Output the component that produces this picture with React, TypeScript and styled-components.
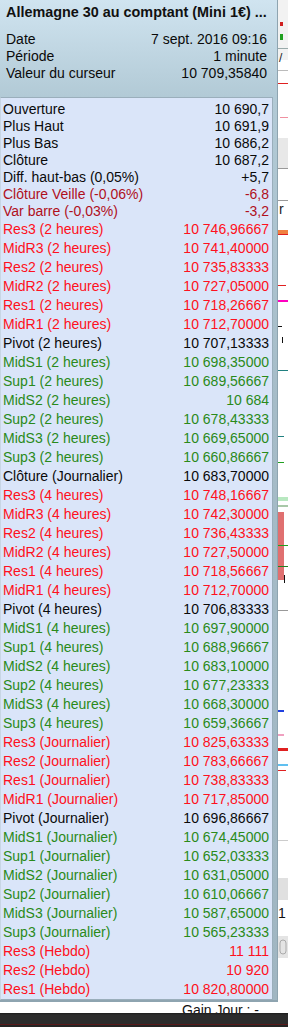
import React from "react";
import styled, { createGlobalStyle } from "styled-components";

const GlobalStyle = createGlobalStyle`
  html, body {
    margin: 0;
    padding: 0;
    width: 288px;
    height: 1027px;
    overflow: hidden;
    background: #fff;
  }
  body {
    font-family: "Liberation Sans", Arial, sans-serif;
  }
`;

type Tone = "black" | "darkred" | "red" | "green";

const toneColor: Record<Tone, string> = {
  black: "#0a0a0a",
  darkred: "#b0101c",
  red: "#ff1020",
  green: "#2a8a1a",
};

const Page = styled.div`
  width: 288px;
  height: 1027px;
  display: flex;
  flex-direction: column;
`;

const Workspace = styled.div`
  display: flex;
  height: 1002px;
`;

const Tooltip = styled.div`
  width: 278px;
  height: 1002px;
  box-sizing: border-box;
  background: linear-gradient(#d0e4f0 0px, #b2cad6 96px, #a6bcc8 400px, #a0b6c2 100%);
  border-right: 1px solid #8ea4b0;
  border-bottom: 2px solid #8ea4b0;
  display: flex;
  flex-direction: column;
`;

const Header = styled.div`
  padding: 4px 10px 0 6px;
  height: 97px;
  box-sizing: border-box;
`;

const Title = styled.div`
  font-weight: bold;
  font-size: 14.4px;
  line-height: 17px;
  color: #111;
  white-space: nowrap;
  margin-bottom: 10px;
`;

const Line = styled.div<{ $tone?: Tone; $height: number }>`
  display: flex;
  justify-content: space-between;
  font-size: 14px;
  line-height: ${(p) => p.$height}px;
  height: ${(p) => p.$height}px;
  color: ${(p) => toneColor[p.$tone ?? "black"]};
  white-space: nowrap;
`;

const Panel = styled.div`
  width: 273px;
  box-sizing: border-box;
  background: #dae5f9;
  border: 1px solid #9aaebb;
  border-left-color: #c8d6e4;
  padding: 2.5px 3px 0 2px;
`;

const ChartStrip = styled.div`
  flex: 1;
  background: #ffffff;
`;

const FooterBand = styled.div`
  height: 11px;
  overflow: hidden;
  background: #fff;
  padding-left: 182px;
  font-size: 14px;
  line-height: 16px;
  color: #111;
  white-space: nowrap;
`;

const DarkBar = styled.div`
  flex: 1;
  background: linear-gradient(#1c1c1c 0px, #2c2c2c 2px, #2c2c2c 11px, #5a1a1a 11px, #5a1a1a 12px, #242424 12px);
`;

const headerRows = [
  ["Date", "7 sept. 2016 09:16"],
  ["Période", "1 minute"],
  ["Valeur du curseur", "10 709,35840"],
];

const topRows: [string, string, Tone][] = [
  ["Ouverture", "10 690,7", "black"],
  ["Plus Haut", "10 691,9", "black"],
  ["Plus Bas", "10 686,2", "black"],
  ["Clôture", "10 687,2", "black"],
  ["Diff. haut-bas (0,05%)", "+5,7", "black"],
  ["Clôture Veille (-0,06%)", "-6,8", "darkred"],
  ["Var barre (-0,03%)", "-3,2", "darkred"],
];

const levelRows: [string, string, Tone][] = [
  ["Res3 (2 heures)", "10 746,96667", "red"],
  ["MidR3 (2 heures)", "10 741,40000", "red"],
  ["Res2 (2 heures)", "10 735,83333", "red"],
  ["MidR2 (2 heures)", "10 727,05000", "red"],
  ["Res1 (2 heures)", "10 718,26667", "red"],
  ["MidR1 (2 heures)", "10 712,70000", "red"],
  ["Pivot (2 heures)", "10 707,13333", "black"],
  ["MidS1 (2 heures)", "10 698,35000", "green"],
  ["Sup1 (2 heures)", "10 689,56667", "green"],
  ["MidS2 (2 heures)", "10 684", "green"],
  ["Sup2 (2 heures)", "10 678,43333", "green"],
  ["MidS3 (2 heures)", "10 669,65000", "green"],
  ["Sup3 (2 heures)", "10 660,86667", "green"],
  ["Clôture (Journalier)", "10 683,70000", "black"],
  ["Res3 (4 heures)", "10 748,16667", "red"],
  ["MidR3 (4 heures)", "10 742,30000", "red"],
  ["Res2 (4 heures)", "10 736,43333", "red"],
  ["MidR2 (4 heures)", "10 727,50000", "red"],
  ["Res1 (4 heures)", "10 718,56667", "red"],
  ["MidR1 (4 heures)", "10 712,70000", "red"],
  ["Pivot (4 heures)", "10 706,83333", "black"],
  ["MidS1 (4 heures)", "10 697,90000", "green"],
  ["Sup1 (4 heures)", "10 688,96667", "green"],
  ["MidS2 (4 heures)", "10 683,10000", "green"],
  ["Sup2 (4 heures)", "10 677,23333", "green"],
  ["MidS3 (4 heures)", "10 668,30000", "green"],
  ["Sup3 (4 heures)", "10 659,36667", "green"],
  ["Res3 (Journalier)", "10 825,63333", "red"],
  ["Res2 (Journalier)", "10 783,66667", "red"],
  ["Res1 (Journalier)", "10 738,83333", "red"],
  ["MidR1 (Journalier)", "10 717,85000", "red"],
  ["Pivot (Journalier)", "10 696,86667", "black"],
  ["MidS1 (Journalier)", "10 674,45000", "green"],
  ["Sup1 (Journalier)", "10 652,03333", "green"],
  ["MidS2 (Journalier)", "10 631,05000", "green"],
  ["Sup2 (Journalier)", "10 610,06667", "green"],
  ["MidS3 (Journalier)", "10 587,65000", "green"],
  ["Sup3 (Journalier)", "10 565,23333", "green"],
  ["Res3 (Hebdo)", "11 111", "red"],
  ["Res2 (Hebdo)", "10 920", "red"],
  ["Res1 (Hebdo)", "10 820,80000", "red"],
];

// chart fragments visible at the right edge behind the tooltip
const ChartEdge = () => (
  <svg width="10" height="1002" viewBox="0 0 10 1002">
    <rect x="0" y="0" width="10" height="60" fill="#f2f2f2" />
    <rect x="2" y="22" width="3" height="4" fill="#d02020" />
    <rect x="2" y="34" width="3" height="6" fill="#20a020" />
    <rect x="0" y="48" width="10" height="1" fill="#9aa" />
    <text x="1" y="62" fontSize="12" fill="#222" fontFamily="Liberation Sans">/</text>
    <rect x="0" y="70" width="10" height="1" fill="#bbb" />
    <rect x="0" y="83" width="10" height="1" fill="#e02020" />
    <rect x="2" y="117" width="8" height="1" fill="#f090a0" />
    <rect x="0" y="138" width="10" height="30" fill="#e8e8e8" />
    <rect x="0" y="168" width="10" height="1" fill="#999" />
    <rect x="0" y="200" width="10" height="1" fill="#999" />
    <text x="1" y="214" fontSize="14" fill="#222" fontFamily="Liberation Sans">r</text>
    <rect x="0" y="230" width="10" height="4" fill="#f08040" />
    <rect x="0" y="234" width="10" height="1" fill="#e02020" />
    <rect x="0" y="285" width="8" height="1" fill="#e02020" />
    <rect x="0" y="300" width="10" height="2" fill="#ff00c0" />
    <rect x="0" y="326" width="4" height="1" fill="#111" />
    <rect x="4" y="337" width="1" height="6" fill="#111" />
    <rect x="0" y="370" width="10" height="1" fill="#208080" />
    <rect x="0" y="436" width="6" height="1" fill="#208080" />
    <rect x="0" y="462" width="6" height="1" fill="#20a020" />
    <rect x="0" y="497" width="10" height="4" fill="#b8e8c0" />
    <rect x="0" y="505" width="10" height="2" fill="#a8c8a8" />
    <rect x="0" y="512" width="6" height="68" fill="#e07070" />
    <rect x="0" y="545" width="10" height="1" fill="#20a020" />
    <rect x="0" y="566" width="10" height="1" fill="#208020" />
    <rect x="6" y="575" width="1" height="8" fill="#111" />
    <rect x="0" y="610" width="10" height="1" fill="#999" />
    <rect x="0" y="710" width="6" height="2" fill="#2040e0" />
    <rect x="0" y="734" width="6" height="2" fill="#f0a0c0" />
    <rect x="0" y="748" width="10" height="3" fill="#e02020" />
    <rect x="0" y="764" width="10" height="2" fill="#60c0f0" />
    <rect x="0" y="770" width="8" height="1" fill="#e02020" />
    <rect x="0" y="840" width="10" height="1" fill="#ccc" />
    <rect x="0" y="878" width="10" height="22" fill="#e0e0e0" />
    <text x="0" y="918" fontSize="14" fill="#111" fontFamily="Liberation Sans">1</text>
    <rect x="0" y="936" width="10" height="22" fill="#e4e4e4" />
    <rect x="2" y="940" width="6" height="14" rx="3" fill="none" stroke="#aaa" />
  </svg>
);

export default function App() {
  return (
    <Page>
      <GlobalStyle />
      <Workspace>
        <Tooltip>
          <Header>
            <Title>Allemagne 30 au comptant (Mini 1€) ...</Title>
            {headerRows.map(([label, value]) => (
              <Line key={label} $height={17}>
                <span>{label}</span>
                <span>{value}</span>
              </Line>
            ))}
          </Header>
          <Panel>
            {topRows.map(([label, value, tone]) => (
              <Line key={label} $tone={tone} $height={17}>
                <span>{label}</span>
                <span>{value}</span>
              </Line>
            ))}
            {levelRows.map(([label, value, tone]) => (
              <Line key={label} $tone={tone} $height={19}>
                <span>{label}</span>
                <span>{value}</span>
              </Line>
            ))}
          </Panel>
        </Tooltip>
        <ChartStrip>
          <ChartEdge />
        </ChartStrip>
      </Workspace>
      <FooterBand>Gain Jour : -</FooterBand>
      <DarkBar />
    </Page>
  );
}
